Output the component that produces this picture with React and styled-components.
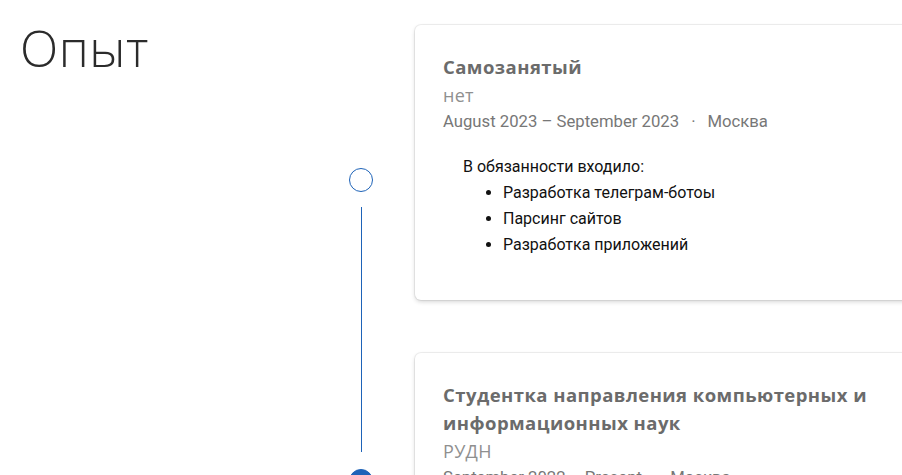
import React from "react";
import styled, { createGlobalStyle } from "styled-components";

const GlobalStyle = createGlobalStyle`
  html, body {
    margin: 0;
    padding: 0;
    background: #fff;
    overflow: hidden;
  }
  body {
    font-family: Roboto, "Liberation Sans", sans-serif;
  }
`;

const Page = styled.div`
  display: grid;
  grid-template-columns: 329px 24px 1fr;
  padding: 25px 0 0 20px;
  width: 1000px;
`;

const Title = styled.h1`
  margin: -9px 0 0;
  font-family: "Open Sans", sans-serif;
  font-weight: 300;
  font-size: 50px;
  line-height: 64px;
  letter-spacing: 0.5px;
  color: #2b2b2b;
`;

const Rail = styled.div`
  display: flex;
  flex-direction: column;
  align-items: center;
  padding-top: 143px;
`;

const Dot = styled.div`
  width: 24px;
  height: 24px;
  box-sizing: border-box;
  border-radius: 50%;
  border: 1px solid #1e63b8;
  background: ${(p) => (p.$filled ? "#1e63b8" : "#fff")};
`;

const Connector = styled.div`
  width: 1px;
  height: 245px;
  margin: 15px 0 17px;
  background: #1e63b8;
`;

const Entries = styled.div`
  display: flex;
  flex-direction: column;
  gap: 53px;
  padding-left: 42px;
`;

const Card = styled.div`
  width: 526px;
  box-sizing: border-box;
  padding: 28px;
  border-radius: 6px;
  background: #fff;
  box-shadow: 0 0 0 1px rgba(0, 0, 0, 0.06), 0 2px 4px rgba(0, 0, 0, 0.16);
`;

const Role = styled.h3`
  margin: 0;
  font-family: "Open Sans", sans-serif;
  font-weight: 700;
  font-size: 18.5px;
  line-height: 28px;
  letter-spacing: 0.45px;
  color: #6b6b6b;
`;

const Company = styled.div`
  font-family: "Open Sans", sans-serif;
  font-weight: 400;
  font-size: 18px;
  line-height: 28px;
  letter-spacing: 0.3px;
  color: #8f8f8f;
`;

const Meta = styled.div`
  font-size: 16.7px;
  line-height: 26px;
  color: #777;
`;

const Sep = styled.span`
  margin: 0 12px;
`;

const Duties = styled.div`
  margin: 19px 0 14px 20px;
  font-size: 16px;
  line-height: 26px;
  color: #111;
`;

const DutyList = styled.ul`
  margin: 0;
  padding-left: 40px;
`;

const entries = [
  {
    role: "Самозанятый",
    company: "нет",
    period: "August 2023 – September 2023",
    city: "Москва",
    intro: "В обязанности входило:",
    duties: ["Разработка телеграм-ботоы", "Парсинг сайтов", "Разработка приложений"],
  },
  {
    role: "Студентка направления компьютерных и информационных наук",
    company: "РУДН",
    period: "September 2022 – Present",
    city: "Москва",
  },
];

export default function App() {
  return (
    <>
      <GlobalStyle />
      <Page>
        <Title>Опыт</Title>
        <Rail>
          <Dot />
          <Connector />
          <Dot $filled />
        </Rail>
        <Entries>
          {entries.map((e) => (
            <Card key={e.role}>
              <Role>{e.role}</Role>
              <Company>{e.company}</Company>
              <Meta>
                {e.period}
                <Sep>·</Sep>
                {e.city}
              </Meta>
              {e.duties && (
                <Duties>
                  {e.intro}
                  <DutyList>
                    {e.duties.map((d) => (
                      <li key={d}>{d}</li>
                    ))}
                  </DutyList>
                </Duties>
              )}
            </Card>
          ))}
        </Entries>
      </Page>
    </>
  );
}
